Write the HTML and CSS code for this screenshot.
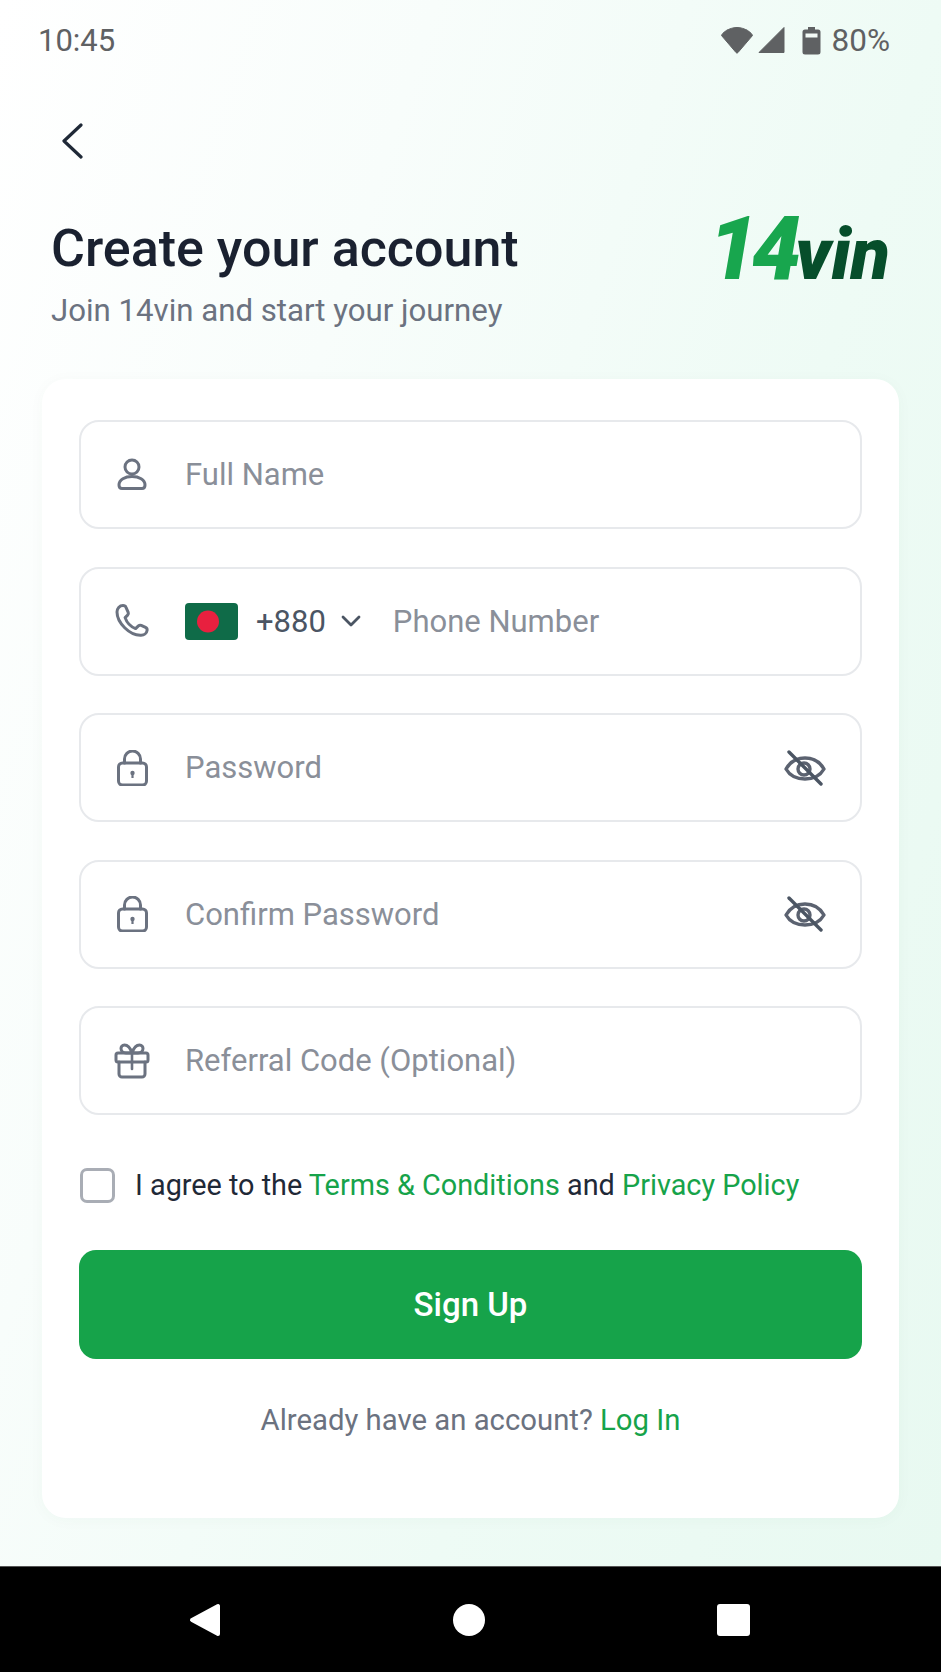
FILE: index.html
```html
<!DOCTYPE html>
<html lang="en">
<head>
<meta charset="utf-8">
<title>Create your account</title>
<link rel="stylesheet" href="styles.css">
</head>
<body>
<div class="screen">
  <main class="content">
    <div class="status">
      <span class="time">10:45</span>
      <div class="status-right">
        <svg class="st-wifi" width="34" height="28" viewBox="0 0 34 28"><path d="M1.500 9.500C2 7 9 1.500 17 1.500S32 7 32.500 9.500L18 26.500c-.6.7-1.400.7-2 0z" fill="#5f6163" stroke="#5f6163" stroke-linejoin="round"/></svg>
        <svg class="st-signal" width="28" height="28" viewBox="0 0 28 28"><path d="M26 1.500V26.500H1z" fill="#5f6163" stroke="#5f6163" stroke-linejoin="round"/></svg>
        <svg class="st-batt" width="19" height="29" viewBox="0 0 19 29"><path d="M6 1h7v2.500h3a2.500 2.500 0 0 1 2.500 2.500v20a2.500 2.500 0 0 1-2.500 2.500H3A2.500 2.500 0 0 1 .5 26V6A2.500 2.500 0 0 1 3 3.500h3z" fill="#5f6163"/><rect x="3.500" y="7.500" width="12" height="4" fill="#f4fbf7"/></svg>
        <span class="pct">80%</span>
      </div>
    </div>
    <svg class="back" width="22" height="36" viewBox="0 0 22 36"><path d="M20 2 3 18l17 16" fill="none" stroke="#1f2937" stroke-width="3.200" stroke-linecap="round" stroke-linejoin="round"/></svg>
    <header class="head">
      <div class="head-text">
        <h1 class="title">Create your account</h1>
        <p class="sub">Join 14vin and start your journey</p>
      </div>
      <div class="logo"><span class="logo-num">14</span><span class="logo-word">vin</span></div>
    </header>
    <section class="card">
      <div class="fields">
        <div class="field">
          <svg class="ico" width="36" height="36" viewBox="0 0 36 36"><circle cx="18" cy="10" r="7" class="ln"/><path d="M5 28c0-5.500 6-8.500 13-8.500s13 3 13 8.500c0 2-1 3.500-3 3.500H8c-2 0-3-1.500-3-3.500z" class="ln"/></svg>
          <span class="ph">Full Name</span>
        </div>
        <div class="field">
          <svg class="ico" width="36" height="36" viewBox="0 0 36 36"><path d="M9 2.500c1.500 0 2.500.5 3 1.800l2.200 5c.4 1 .2 2-.6 2.800l-2.500 2.500c1.500 4.500 5.500 9 10.500 11l2.800-2.700c.8-.7 1.800-.9 2.800-.5l4.300 2c1.300.6 1.800 1.600 1.600 3-.4 3-3 4.800-6 4.800C15.500 32.700 3 19.500 3 9 3 5.500 5.500 2.500 9 2.500z" class="ln"/></svg>
          <svg class="flag" width="53" height="37" viewBox="0 0 53 37"><rect width="53" height="37" rx="4" fill="#0f6b48"/><circle cx="23" cy="18.500" r="11" fill="#e8203f"/></svg>
          <span class="code">+880</span>
          <svg class="chev" width="20" height="12" viewBox="0 0 20 12"><path d="M2 2l8 8 8-8" fill="none" stroke="#4b5563" stroke-width="2.800" stroke-linecap="round" stroke-linejoin="round"/></svg>
          <span class="ph">Phone Number</span>
        </div>
        <div class="field">
          <svg class="ico" width="36" height="36" viewBox="0 0 36 36"><rect x="4.500" y="13" width="28" height="22" rx="4" class="ln"/><path d="M10.500 13V9a8 8 0 0 1 16 0v4" class="ln"/><circle cx="18.500" cy="23" r="2.200" fill="#6b7280"/><path d="M18.500 24v4" stroke="#6b7280" stroke-width="2.200"/></svg>
          <span class="ph">Password</span>
          <svg class="eye" width="42" height="36" viewBox="0 0 42 36"><path d="M2 19c4-7 11-11 19-11s15 4 19 11c-4 7-11 10-19 10S6 26 2 19z" class="ln-dark"/><circle cx="20" cy="19" r="6" class="ln-dark"/><path d="M5 2l32 32" fill="none" stroke="#4b5563" stroke-width="3.400" stroke-linecap="round"/></svg>
        </div>
        <div class="field">
          <svg class="ico" width="36" height="36" viewBox="0 0 36 36"><rect x="4.500" y="13" width="28" height="22" rx="4" class="ln"/><path d="M10.500 13V9a8 8 0 0 1 16 0v4" class="ln"/><circle cx="18.500" cy="23" r="2.200" fill="#6b7280"/><path d="M18.500 24v4" stroke="#6b7280" stroke-width="2.200"/></svg>
          <span class="ph">Confirm Password</span>
          <svg class="eye" width="42" height="36" viewBox="0 0 42 36"><path d="M2 19c4-7 11-11 19-11s15 4 19 11c-4 7-11 10-19 10S6 26 2 19z" class="ln-dark"/><circle cx="20" cy="19" r="6" class="ln-dark"/><path d="M5 2l32 32" fill="none" stroke="#4b5563" stroke-width="3.400" stroke-linecap="round"/></svg>
        </div>
        <div class="field">
          <svg class="ico" width="36" height="36" viewBox="0 0 36 36"><rect x="2" y="10" width="32" height="9" rx="2" class="ln"/><path d="M5 19v12a3 3 0 0 0 3 3h20a3 3 0 0 0 3-3V19" class="ln"/><path d="M18 10C16 4 13 2 10.500 2 8 2 7 4 7 5.500 7 8 9 10 12 10zM18 10c2-6 5-8 7.500-8S29 4 29 5.500C29 8 27 10 24 10z" class="ln"/><path d="M18 10v16" stroke="#6b7280" stroke-width="2.600" stroke-linecap="round"/></svg>
          <span class="ph">Referral Code (Optional)</span>
        </div>
      </div>
      <div class="agree">
        <span class="box"></span>
        <span class="agree-text">I agree to the <span class="link">Terms &amp; Conditions</span> and <span class="link">Privacy Policy</span></span>
      </div>
      <button class="btn" type="button">Sign Up</button>
      <p class="login">Already have an account? <span class="link">Log In</span></p>
    </section>
  </main>
  <nav class="nav">
    <svg width="32" height="34" viewBox="0 0 32 34"><path d="M29 3v28L3 17z" fill="#fff" stroke="#fff" stroke-width="4" stroke-linejoin="round"/></svg>
    <span class="nav-home"></span>
    <span class="nav-recent"></span>
  </nav>
</div>
</body>
</html>
```
FILE: styles.css
```css
* { box-sizing: border-box; }
html, body { margin: 0; padding: 0; }
body { font-family: Roboto, "Liberation Sans", sans-serif; background: #000; }
.screen { width: 941px; height: 1672px; display: flex; flex-direction: column; overflow: hidden; }
.content { height: 1566px; flex: none; display: flex; flex-direction: column; background: linear-gradient(108deg, #ffffff 0%, #f8fdfb 30%, #eefbf5 65%, #e8f9f1 100%); }
.status { height: 80px; display: flex; align-items: center; justify-content: space-between; padding: 0 51px 0 38px; color: #5f6163; font-size: 31px; }
.status-right { display: flex; align-items: center; }
.st-signal { margin-left: 4px; }
.st-batt { margin-left: 16px; }
.pct { margin-left: 11px; font-size: 31.500px; }
.back { margin: 43px 0 0 61px; flex: none; display: block; }
.head { display: flex; justify-content: space-between; align-items: flex-start; padding: 0 51px 0 51px; margin-top: 54px; height: 166px; }
.head-text { padding-top: 6px; }
.title { margin: 0; font-size: 52px; line-height: 60px; font-weight: 500; color: #1a2130; }
.sub { margin: 11px 0 0; font-size: 31.200px; line-height: 42px; color: #6b7280; }
.logo { display: flex; align-items: baseline; font-family: Roboto, sans-serif; font-style: italic; font-weight: 900; line-height: 72px; height: 72px; }
.logo-num { font-size: 88px; letter-spacing: -6px; color: #18a64e; }
.logo-word { font-size: 72px; letter-spacing: 0; color: #064e2b; }
.card { margin: 0 42px; height: 1139px; background: #fff; border-radius: 24px; padding: 41px 37px 0; display: flex; flex-direction: column; box-shadow: 0 2px 16px rgba(20, 80, 50, .03); }
.fields { display: flex; flex-direction: column; gap: 37.600px; }
.field { height: 109px; border: 2px solid #e7e9ec; border-radius: 20px; display: flex; align-items: center; padding: 0 34px 0 33px; background: #fff; }
.ico { flex: none; margin-right: 35px; }
.ln { fill: none; stroke: #6b7280; stroke-width: 3; stroke-linejoin: round; stroke-linecap: round; }
.ln-dark { fill: none; stroke: #5b6270; stroke-width: 3.400; stroke-linejoin: round; stroke-linecap: round; }
.ph { font-size: 31px; color: #8a8f99; }
.flag { flex: none; margin-right: 18px; }
.code { font-size: 31px; color: #4b5563; margin-right: 15px; }
.chev { flex: none; margin-right: 32px; }
.eye { margin-left: auto; flex: none; }
.agree { display: flex; align-items: center; margin-top: 52px; height: 36px; }
.box { width: 35px; height: 35px; border: 3px solid #a9adb5; border-radius: 7px; flex: none; margin: 0 20px 0 1px; }
.agree-text { font-size: 28.800px; color: #1f2937; white-space: nowrap; }
.link { color: #16a34a; }
.btn { margin-top: 47px; height: 109px; border: 0; border-radius: 17px; background: #16a34a; color: #fff; font: 500 33px Roboto, sans-serif; }
.login { margin: 43px 0 0; text-align: center; font-size: 29.300px; line-height: 36px; color: #6b7280; }
.nav { flex: 1; background: #000; display: flex; align-items: center; justify-content: space-between; padding: 0 191px 0 189px; border-top: 1px solid #555; }
.nav-home { width: 32px; height: 32px; border-radius: 50%; background: #fff; }
.nav-recent { width: 33px; height: 32px; border-radius: 3px; background: #fff; }
```
